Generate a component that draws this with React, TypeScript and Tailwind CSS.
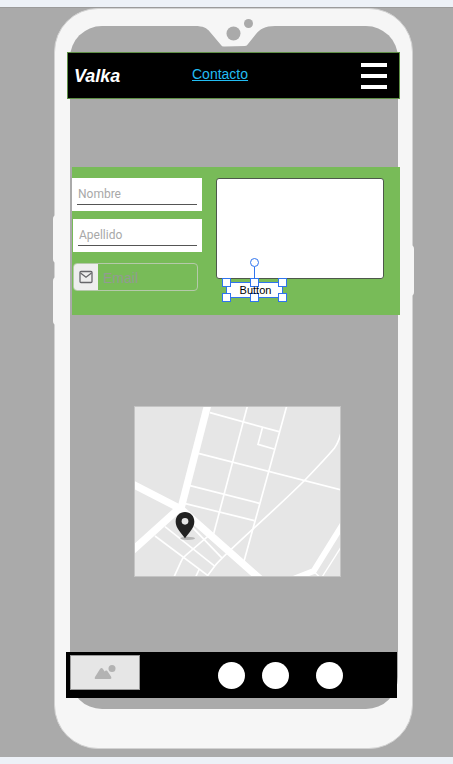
import React from "react";

function Notch() {
  return (
    <svg
      className="absolute -top-2.5 left-1/2 -translate-x-1/2"
      width="90"
      height="34"
      viewBox="0 0 90 34"
      aria-hidden="true"
    >
      <path
        d="M2 8L6 10C14 10 18 12 21 16L32 29Q33 31 36 30.500L56 30Q58 30 59 28L67 18C71 13 76 10 86 10L88 8Z"
        fill="#f6f6f6"
      />
      <circle cx="44.500" cy="17.500" r="7" fill="#aaaaaa" />
      <circle cx="59.500" cy="7.500" r="4.500" fill="#aaaaaa" />
    </svg>
  );
}

function NavBar() {
  return (
    <header className="-mr-0.5 -ml-[3px] flex h-[47px] items-center border border-[#5f9046] bg-black pr-3 pl-1.5">
      <h1 className="w-[118px] text-lg leading-6 font-bold text-white italic">Valka</h1>
      <a href="#contacto" className="pb-1 text-sm leading-4 text-[#22bdf3] underline">
        Contacto
      </a>
      <button type="button" aria-label="Menu" className="ml-auto flex w-[26px] flex-col gap-[7px]">
        <span className="h-1 w-full bg-white" />
        <span className="h-1 w-full bg-white" />
        <span className="h-1 w-full bg-white" />
      </button>
    </header>
  );
}

function LineField({ id, label }: { id: string; label: string }) {
  return (
    <label htmlFor={id} className="block h-[33px] bg-white px-[5px] pt-1.5">
      <input
        id={id}
        type="text"
        aria-label={label}
        placeholder={label}
        className="block h-[21px] w-full border-b border-[#555555] bg-transparent px-px font-[Roboto,sans-serif] text-xs text-gray-700 outline-none placeholder:text-[#a8a8a8]"
      />
    </label>
  );
}

function EmailField() {
  return (
    <div className="mr-1 flex h-7 overflow-hidden rounded border border-[#b5c9aa]">
      <label htmlFor="email" className="flex w-6 shrink-0 items-center justify-center bg-[#eeeeee]">
        <svg width="14" height="14" viewBox="0 0 14 14" fill="none" stroke="#66666a" aria-hidden="true">
          <rect x="1" y="1.500" width="12" height="11" rx="1" strokeWidth="1.300" />
          <path d="M1.500 3L7 7.200L12.500 3" strokeWidth="1.300" />
        </svg>
      </label>
      <input
        id="email"
        type="email"
        aria-label="Email"
        placeholder="Email"
        className="w-full min-w-0 bg-transparent px-[5px] pt-0.5 text-sm text-gray-700 outline-none placeholder:text-[#939a93]"
      />
    </div>
  );
}

function Selection() {
  const handle = "absolute size-[9px] border border-[#2f74ee] bg-white";
  return (
    <span className="pointer-events-none absolute inset-0 border border-[#2f74ee]" aria-hidden="true">
      <span className="absolute -top-[25px] left-[23px] size-[9px] rounded-full border border-[#2f74ee] bg-white" />
      <span className="absolute -top-4 left-[27px] h-3 w-px bg-[#2f74ee]" />
      <span className={`${handle} -top-[5px] -left-[5px]`} />
      <span className={`${handle} -top-[5px] left-[23px]`} />
      <span className={`${handle} -top-[5px] -right-[5px]`} />
      <span className={`${handle} -bottom-[5px] -left-[5px]`} />
      <span className={`${handle} -bottom-[5px] left-[23px]`} />
      <span className={`${handle} -right-[5px] -bottom-[5px]`} />
    </span>
  );
}

function ContactForm() {
  return (
    <form className="mt-[68px] -mr-0.5 ml-0.5 flex h-[148px] gap-3.5 bg-[#78bb58] pt-[11px] pr-4">
      <div className="flex w-[130px] flex-col">
        <LineField id="nombre" label="Nombre" />
        <div className="mt-2 mb-[11px] ml-px">
          <LineField id="apellido" label="Apellido" />
        </div>
        <div className="ml-px">
          <EmailField />
        </div>
      </div>
      <div className="flex min-w-0 flex-1 flex-col">
        <textarea
          aria-label="Mensaje"
          className="block h-[101px] w-full resize-none rounded-[3px] border border-[#4d584a] bg-white p-2 text-sm outline-none"
        />
        <button
          type="button"
          className="relative mt-[3px] ml-2.5 h-4 w-[57px] bg-white pl-0.5 text-center text-[11px] leading-4 text-black"
        >
          <Selection />
          <span className="relative">Button</span>
        </button>
      </div>
    </form>
  );
}

function StreetMap() {
  return (
    <svg
      className="mt-[91px] mr-[57px] ml-16 block h-[171px] border border-[#c4c4c4] bg-[#e6e6e6]"
      viewBox="30 21 615 507"
      preserveAspectRatio="xMidYMid slice"
      role="img"
      aria-label="Mapa"
    >
      <g fill="none" stroke="#ffffff" strokeWidth="5">
        <path d="M255 38L462 95" />
        <path d="M220 160L650 270" />
        <path d="M195 257L403 310" />
        <path d="M178 310L388 362" />
        <path d="M368 15L265 405" />
        <path d="M486 15L357 484" />
        <path d="M412 84L399 133L447 147" />
        <path d="M650 90Q642 126 628 145Q600 178 540 240C440 340 310 450 270 497L247 528" />
        <path d="M90 408L249 527" />
        <path d="M120 380L270 499" />
        <path d="M146 533L168 485Q172 474 182 466L252 406" />
        <path d="M211 533L223 507" />
        <path d="M203 383L292 475" />
      </g>
      <g fill="none" stroke="#ffffff" strokeWidth="4">
        <path d="M590 533L650 438" />
        <path d="M568 516L586 533" />
      </g>
      <g fill="none" stroke="#ffffff" strokeWidth="22">
        <path d="M248 15L168 325" />
        <path d="M20 251L168 327L410 541" />
        <path d="M20 454L168 320" />
        <path d="M655 370L566 513L490 543" strokeWidth="18" />
      </g>
      <ellipse cx="188" cy="415" rx="22" ry="5" fill="#b5b5b5" />
      <path
        d="M180 336C164 336 152 348 152 365C152 384 168 398 180 415C192 398 208 384 208 365C208 348 196 336 180 336Z"
        fill="#222222"
      />
      <circle cx="180" cy="364" r="10" fill="#e6e6e6" />
    </svg>
  );
}

function FooterBar() {
  return (
    <footer className="mt-[75px] mr-px -ml-1 flex h-[46px] items-center bg-black">
      <div className="mt-[3px] ml-1 flex h-[35px] w-[70px] items-center justify-center self-start border border-[#999999] bg-[#e6e6e6]">
        <svg width="22" height="16" viewBox="0 0 22 16" fill="#b3b3b3" aria-hidden="true">
          <path d="M1 12L6 4Q7.500 2 9 4L10.500 6.500Q12.500 4.500 14 7L17 11.500Q18 14 16 14H2Q0 14 1 12Z" />
          <circle cx="18" cy="3.500" r="3.500" />
        </svg>
      </div>
      <nav className="ml-[78px] flex" aria-label="Redes">
        <button type="button" aria-label="Red 1" className="size-[27px] rounded-full bg-white" />
        <button type="button" aria-label="Red 2" className="ml-[17px] size-[27px] rounded-full bg-white" />
        <button type="button" aria-label="Red 3" className="ml-[27px] size-[27px] rounded-full bg-white" />
      </nav>
    </footer>
  );
}

export default function App() {
  return (
    <div className="bg-[#edf1f7] py-[7px] font-['Liberation_Sans',Arial,sans-serif]">
      <main className="border-t border-[#9b9b9b] bg-[#aaaaaa] pr-10 pb-2 pl-[54px]">
        <div className="relative rounded-[44px] border border-[#d2d2d2] bg-[#f6f6f6] pt-[17px] pr-3.5 pb-[39px] pl-[15px]">
          <span className="absolute top-[206px] -left-0.5 h-12 w-1 rounded-l-sm bg-[#f6f6f6]" />
          <span className="absolute top-[268px] -left-0.5 h-12 w-1 rounded-l-sm bg-[#f6f6f6]" />
          <span className="absolute top-[236px] -right-0.5 h-[51px] w-1 rounded-r-sm bg-[#f6f6f6]" />
          <div className="relative flex flex-col rounded-[32px] bg-[#aaaaaa] pt-[26px] pb-[11px]">
            <Notch />
            <NavBar />
            <ContactForm />
            <StreetMap />
            <FooterBar />
          </div>
        </div>
      </main>
    </div>
  );
}
